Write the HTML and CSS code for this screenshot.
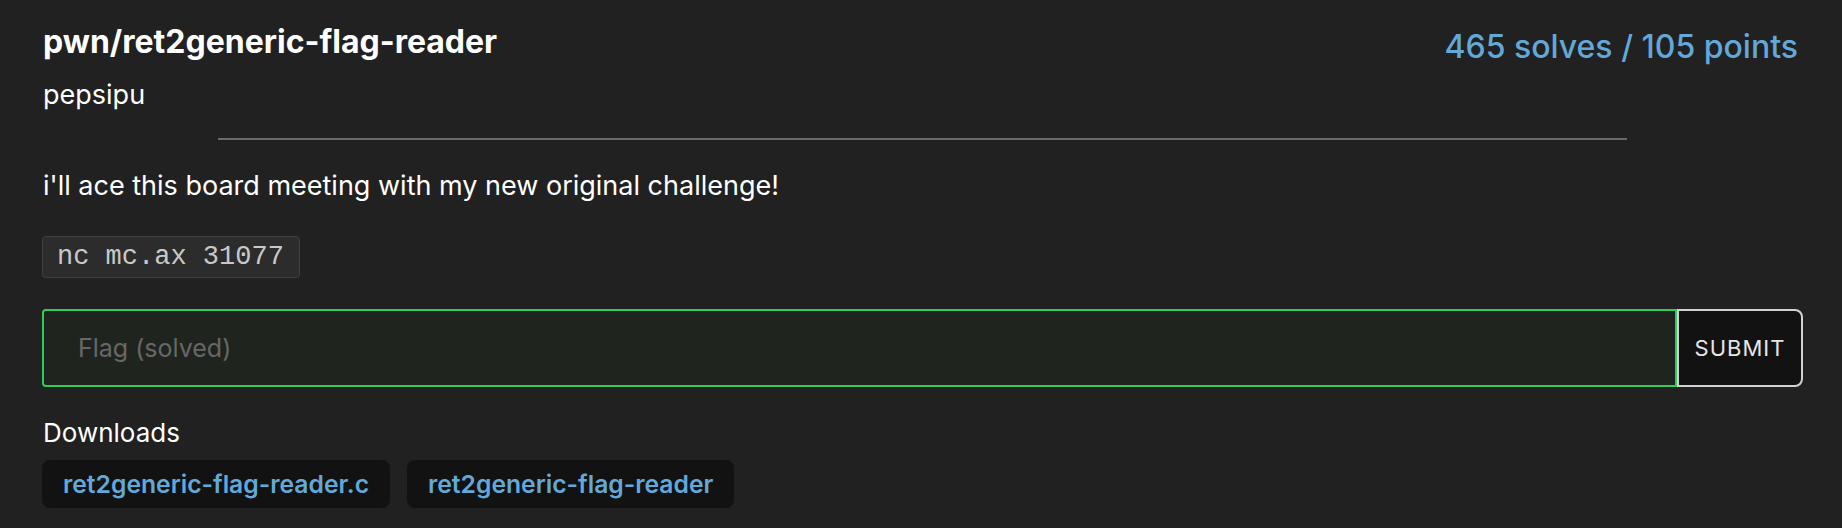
FILE: index.html
```html
<!DOCTYPE html>
<html lang="en">
<head>
<meta charset="utf-8">
<title>pwn/ret2generic-flag-reader</title>
<link rel="stylesheet" href="styles.css">
</head>
<body>
<main class="challenge">
  <header class="head">
    <div class="head-left">
      <h1 class="title">pwn/ret2generic-flag-reader</h1>
      <div class="author">pepsipu</div>
    </div>
    <div class="stats">465 solves / 105 points</div>
  </header>
  <hr class="divider">
  <p class="desc">i'll ace this board meeting with my new original challenge!</p>
  <div class="code-row"><code class="code">nc mc.ax 31077</code></div>
  <form class="flag-form">
    <input class="flag-input" type="text" placeholder="Flag (solved)">
    <button class="submit" type="button">SUBMIT</button>
  </form>
  <div class="downloads-label">Downloads</div>
  <div class="downloads">
    <a class="chip" href="#">ret2generic-flag-reader.c</a>
    <a class="chip" href="#">ret2generic-flag-reader</a>
  </div>
</main>
</body>
</html>
```
FILE: styles.css
```css
html, body {
  margin: 0;
  padding: 0;
  background: #212121;
}
body {
  font-family: Inter, "Noto Sans", sans-serif;
  color: #ffffff;
  height: 528px;
  overflow: hidden;
}
.challenge {
  padding: 22px 39px 0 42px;
}
.head {
  display: flex;
  justify-content: space-between;
  align-items: flex-start;
}
.title {
  margin: 0;
  font-size: 32px;
  font-weight: 700;
  line-height: 40px;
  padding-left: 1px;
}
.author {
  font-size: 27px;
  line-height: 40px;
  margin-top: 13px;
  padding-left: 1px;
}
.stats {
  color: #62a8d8;
  font-size: 32px;
  font-weight: 500;
  line-height: 48px;
  margin-top: 1px;
  margin-right: 5px;
}
.divider {
  width: 80%;
  margin: 23px auto 0;
  border: 0;
  height: 2px;
  background: #6a6a6a;
}
.desc {
  margin: 26px 0 0;
  font-size: 27px;
  line-height: 40px;
  padding-left: 1px;
}
.code-row {
  margin-top: 30px;
}
.code {
  display: inline-block;
  font-family: "Liberation Mono", monospace;
  font-size: 27px;
  line-height: 40px;
  color: #c8c8c8;
  background: #2c2c2c;
  border: 1px solid #404040;
  border-radius: 4px;
  padding: 0 15px 0 14px;
}
.flag-form {
  display: flex;
  margin-top: 31px;
  height: 78px;
}
.flag-input {
  flex: 1;
  min-width: 0;
  box-sizing: border-box;
  height: 100%;
  background: #1f241f;
  border: 2px solid #2fcc5a;
  border-radius: 4px 0 0 4px;
  padding: 0 34px;
  font-family: Inter, "Noto Sans", sans-serif;
  font-size: 25px;
  color: #fff;
  outline: none;
}
.flag-input::placeholder {
  color: #676767;
}
.submit {
  box-sizing: border-box;
  width: 126px;
  height: 100%;
  background: #121212;
  border: 2px solid #d2d2d2;
  border-radius: 0 8px 8px 0;
  color: #e6e6e6;
  font-family: Inter, "Noto Sans", sans-serif;
  font-size: 22px;
  letter-spacing: 1px;
  padding: 0;
}
.downloads-label {
  margin-top: 26px;
  font-size: 26px;
  line-height: 40px;
  padding-left: 1px;
}
.downloads {
  display: flex;
  gap: 17px;
  margin-top: 7px;
}
.chip {
  display: block;
  background: #121212;
  border-radius: 8px;
  padding: 0 21px;
  height: 48px;
  line-height: 48px;
  color: #62a8d8;
  font-size: 24.7px;
  font-weight: 600;
  text-decoration: none;
}
```
